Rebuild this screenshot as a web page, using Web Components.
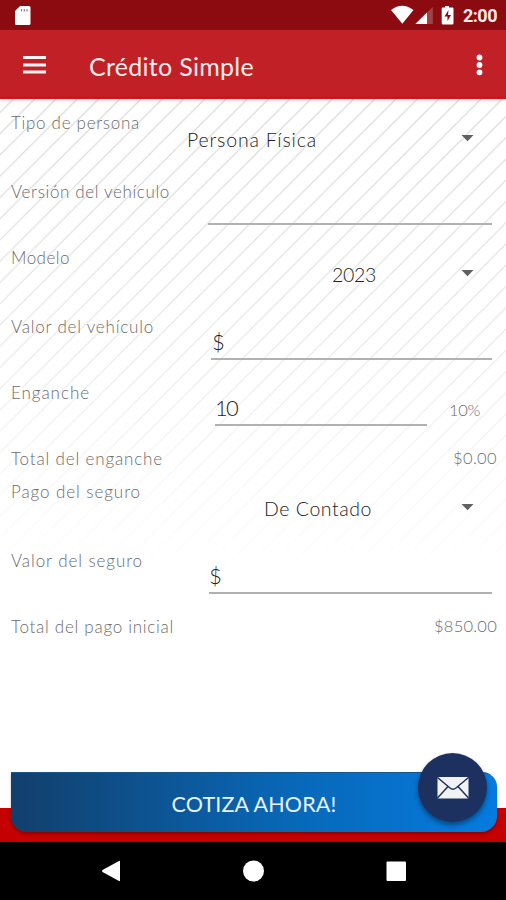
<!DOCTYPE html>
<html lang="es">
<head>
<meta charset="utf-8">
<title>Crédito Simple</title>
<style>
html,body{margin:0;height:100%}
body{font-family:Lato,"Liberation Sans",sans-serif;background:#fff;overflow:hidden}
</style>
</head>
<body>
<credit-app></credit-app>
<script>
const define=(name,html,init)=>customElements.define(name,class extends HTMLElement{
  connectedCallback(){
    if(this.shadowRoot)return;
    const t=document.createElement('template');
    t.innerHTML=html;
    this.attachShadow({mode:'open'}).append(t.content.cloneNode(true));
    if(init)init(this);
  }
});

// Text run whose tracking is spread so that it fills the width given in `w`.
define('fit-text',`<style>:host{display:inline-block;white-space:pre}span{display:inline-block}</style><span><slot></slot></span>`,el=>{
  const s=el.shadowRoot.querySelector('span'),n=el.textContent.length;
  s.style.letterSpacing=((+el.getAttribute('w')-s.getBoundingClientRect().width)/n)+'px';
});

define('status-bar',`<style>
:host{display:flex;height:30px;background:#8c0b11;color:#fff;align-items:center;justify-content:space-between;box-sizing:border-box;padding:0 9px 0 14px}
svg{display:block}div{display:flex;align-items:center;height:30px}
fit-text{font:bold 18px/30px Roboto,sans-serif;padding-top:2px;color:#fbeaea}
</style>
<svg width="18" height="30"><path d="M1 11L6 6h9q1.500 0 1.500 1.500v16q0 1.500-1.500 1.500H2.500Q1 25 1 23.500z" fill="#fff"/><path d="M7.500 9v2.500M10.300 9v2.500M13 9v2.500" stroke="#b96f72" stroke-width="1.200"/></svg>
<div><svg width="72" height="30"><path d="M0 10Q11 1.500 22.500 10L11.300 23.700z" fill="#fff"/><path d="M41.800 7v17H24.300z" fill="#a04348"/><path d="M36 12.500V24H24.300z" fill="#fff"/><path d="M54 6h4v1.500h3.500q1 0 1 1V23q0 1.500-1.300 1.500H52q-1.300 0-1.300-1.500V8.500q0-1 1-1H54z" fill="#fff"/><path d="M57.500 10l-4 6.500h3V21l3.500-6h-3z" fill="#8c0b11"/></svg><fit-text w="34">2:00</fit-text></div>`);

define('app-bar',`<style>
:host{display:flex;height:69px;box-sizing:border-box;background:linear-gradient(#c12026 0 65px,#c7181c 67px);align-items:center;padding:0 20px 0 23px;color:#ffecec;position:relative;box-shadow:0 1px 4px #28644840}
fit-text{font-size:25px;line-height:34px;margin:3px auto 0 42px}
svg{display:block}
</style>
<svg width="24" height="20"><path d="M0 2.500h23M0 10h23M0 17h23" stroke="#fff2f2" stroke-width="2.800"/></svg>
<fit-text w="165">Crédito Simple</fit-text>
<svg width="14" height="24"><g fill="#fff"><circle cx="7.500" cy="4.500" r="2.900"/><circle cx="7.500" cy="12" r="2.900"/><circle cx="7.500" cy="19.300" r="2.900"/></g></svg>`);

define('form-row',`<style>
:host{display:flex;justify-content:space-between;box-sizing:border-box;height:var(--h,66px);padding:0 9px 0 11px}
.l{font-size:17px;line-height:21px;color:#6c6c6c;font-weight:300}
</style><div class="l"><slot name="label"></slot></div><slot></slot>`);

define('select-value',`<style>
:host{display:flex;align-items:center;height:55px;color:#222;font-size:19.500px;font-weight:300;padding-right:23px}
svg{display:block;margin:-3px 0 0 var(--gap)}
</style><slot></slot><svg width="13" height="8"><path d="M.5 1h12L6.500 7.200z" fill="#606060"/></svg>`);

define('text-input',`<style>
:host{display:block;box-sizing:border-box;width:var(--w,284px);height:44px;border-bottom:2px solid #b1b1b1;margin-right:var(--mr,5px);font-size:22px;line-height:28px;color:#222;font-weight:300;padding:12px 0 0 var(--pl,3px)}
</style><slot></slot>`);

define('credit-form',`<style>
:host{display:block;height:743px;box-sizing:border-box;padding-top:13px;background:linear-gradient(#fff 0 709px,#c40000 709px);position:relative}
.bg{position:absolute;inset:0;width:506px;height:480px}
.rows{position:relative}
.note{font-size:16.500px;line-height:21px;color:#6c6c6c;font-weight:300}
</style>
<svg class="bg"><defs>
<pattern id="d" width="21.250" height="21.250" patternUnits="userSpaceOnUse" patternTransform="translate(13.500 0)"><path d="M-2 2L2-2M-2 23.250L23.250-2M19.250 23.250L23.250 19.250" stroke="#d4d4d4" stroke-width="1.150"/></pattern>
<linearGradient id="f" x2="0" y2="1"><stop stop-color="#fff"/><stop offset=".5" stop-color="#999"/><stop offset=".8" stop-color="#333"/><stop offset="1" stop-color="#000"/></linearGradient>
<mask id="m"><rect width="506" height="480" fill="url(#f)"/></mask></defs>
<rect width="506" height="480" fill="url(#d)" mask="url(#m)"/></svg>
<div class="rows">
<form-row style="--h:69px"><fit-text slot="label" w="129">Tipo de persona</fit-text><select-value style="--gap:144px"><fit-text w="130">Persona Física</fit-text></select-value></form-row>
<form-row><fit-text slot="label" w="159">Versión del vehículo</fit-text><text-input></text-input></form-row>
<form-row style="--h:69px"><fit-text slot="label" w="59">Modelo</fit-text><select-value style="--gap:85px"><fit-text w="44">2023</fit-text></select-value></form-row>
<form-row><fit-text slot="label" w="143">Valor del vehículo</fit-text><text-input style="--w:281px;--pl:1px">$</text-input></form-row>
<form-row><fit-text slot="label" w="79">Enganche</fit-text><text-input style="--w:212px;--mr:-103px;--pl:0px"><fit-text w="22">10</fit-text></text-input><fit-text class="note" style="margin:18px 17px 0 0" w="31">10%</fit-text></form-row>
<form-row style="--h:33px"><fit-text slot="label" w="152">Total del enganche</fit-text><fit-text class="note" w="44">$0.00</fit-text></form-row>
<form-row style="--h:69px"><fit-text slot="label" w="130">Pago del seguro</fit-text><select-value style="--gap:89px"><fit-text w="108">De Contado</fit-text></select-value></form-row>
<form-row><fit-text slot="label" w="132">Valor del seguro</fit-text><text-input style="--w:283px;--pl:0px">$</text-input></form-row>
<form-row style="--h:33px"><fit-text slot="label" w="163">Total del pago inicial</fit-text><fit-text class="note" w="63">$850.00</fit-text></form-row>
</div>`);

define('quote-button',`<style>
:host{position:absolute;left:11px;top:772px;width:486px;height:60px;box-sizing:border-box;border-top:1px solid #17578f;border-radius:0 15px 16px 16px;background:linear-gradient(90deg,#123f6c,#0868b8 58%,#057be0);display:flex;justify-content:center;align-items:center;color:#e8f2ff;font-size:21.500px;box-shadow:0 2px 3px #0004}
fit-text{padding-top:3px}
</style><fit-text w="165">COTIZA AHORA!</fit-text>`);

define('mail-fab',`<style>
:host{position:absolute;left:418px;top:753px;width:69px;height:69px;border-radius:50%;background:#1d3160;display:flex;align-items:center;justify-content:center;box-shadow:0 3px 5px #0006}
</style><svg width="34" height="24" style="margin-top:1px"><rect x="1.500" y="1" width="31" height="21.500" rx="1" fill="#f2f2f2"/><path d="M1.500 1.500L14 12q3 2.500 6 0L32.500 1.500M1.500 22l10.500-11.500M32.500 22L22 10.500" fill="none" stroke="#1d3160" stroke-width="1.500"/></svg>`);

define('nav-bar',`<style>
:host{display:block;height:58px;background:#000}svg{display:block}
</style><svg width="506" height="58" fill="#fff"><path d="M102.500 28L119 19q1-.5 1 .5v19q0 1-1 .5L102.500 30q-1-1 0-2z"/><circle cx="253.500" cy="29" r="10.500"/><rect x="386.500" y="19.500" width="19.500" height="19.500" rx="1"/></svg>`);

define('credit-app',`<style>
:host{display:flex;flex-direction:column;width:506px;height:900px;position:relative}
app-bar{z-index:1}
</style><status-bar></status-bar><app-bar></app-bar><credit-form></credit-form><nav-bar></nav-bar><quote-button></quote-button><mail-fab></mail-fab>`);
</script>
</body>
</html>
